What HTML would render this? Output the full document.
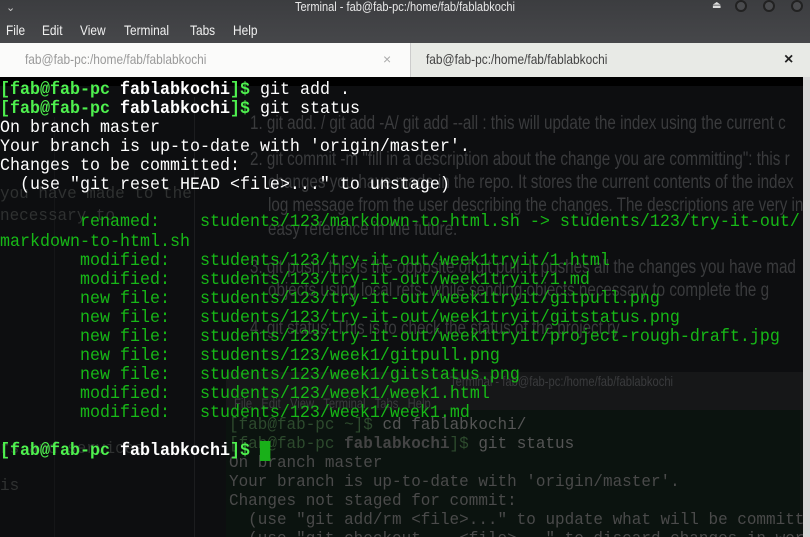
<!DOCTYPE html>
<html><head><meta charset="utf-8"><style>
*{margin:0;padding:0;box-sizing:border-box}
body{width:810px;height:537px;overflow:hidden;background:#0c0d0f;font-family:"Liberation Sans",sans-serif;position:relative}
#top{position:absolute;left:0;top:0;width:810px;height:43px;background:linear-gradient(#3c3d40,#46474a)}
#title{position:absolute;top:0;left:0;width:810px;text-align:center;color:#e8e8e8;font-size:13px;line-height:14px;transform:scaleX(.85)}
.menu{position:absolute;top:22px;color:#f0f0f0;font-size:14px;transform:scaleX(.85);transform-origin:left}
.circ{position:absolute;top:0px;width:12px;height:12px;border-radius:50%;background:#4a4b4e;border:2px solid #222}
#tabs{position:absolute;top:43px;left:0;width:810px;height:34px;background:#f4f5f2}
.tab{position:absolute;top:0;height:34px;font-size:14px;line-height:33px}
#term{position:absolute;left:0;top:77px;width:803px;height:460px;background:#0d0e10;overflow:hidden}
.ghost{position:absolute;color:#3a3b3d;font-size:19px;white-space:nowrap;transform:scaleX(.8);transform-origin:left}
.gm{position:absolute;color:#2f3131;font-family:"Liberation Mono",monospace;font-size:17px;white-space:pre;transform:scaleX(.94);transform-origin:left}
.l{position:absolute;left:0;height:19px;font-family:"Liberation Mono",monospace;font-size:17.5px;line-height:19px;white-space:pre;color:#fff;transform:scaleX(.952);transform-origin:left}
.b{color:#4ef04e;font-weight:bold}.w{color:#fff;font-weight:bold}.g{color:#17b817}
</style></head><body>
<div id="top">
<div style="position:absolute;left:6px;top:1px;color:#ccc;font-size:11px">&#8964;</div>
<div id="title">Terminal - fab@fab-pc:/home/fab/fablabkochi</div>
<div class="menu" style="left:6px">File</div><div class="menu" style="left:42px">Edit</div><div class="menu" style="left:80px">View</div><div class="menu" style="left:124px">Terminal</div><div class="menu" style="left:190px">Tabs</div><div class="menu" style="left:233px">Help</div>
<div style="position:absolute;left:712px;top:0px;color:#ddd;font-size:10px">&#9167;</div>
<div class="circ" style="left:735px"></div><div class="circ" style="left:763px"></div><div class="circ" style="left:791px"></div>
</div>
<div id="tabs">
<div class="tab" style="left:0;width:410px;background:#fbfbfa"><span style="position:absolute;left:25px;color:#9a9a9a;transform:scaleX(.85);transform-origin:left;display:inline-block">fab@fab-pc:/home/fab/fablabkochi</span><span style="position:absolute;left:383px;color:#aaa">×</span></div>
<div class="tab" style="left:410px;width:400px;background:#e8eae6;border-left:1px solid #ccc"><span style="position:absolute;left:15px;color:#444;transform:scaleX(.85);transform-origin:left;display:inline-block">fab@fab-pc:/home/fab/fablabkochi</span><span style="position:absolute;left:373px;color:#222;font-weight:bold;font-size:16px">×</span></div>
</div>
<div style="position:absolute;left:803px;top:77px;width:7px;height:460px;background:#d8d8d8"></div>
<div id="term">
<div style="position:absolute;left:0;top:0;width:803px;height:9px;background:#000"></div>
<div style="position:absolute;left:194px;top:20px;width:1px;height:440px;background:#1c1d1f"></div>
<div style="position:absolute;left:54px;top:40px;width:1px;height:420px;background:#151618"></div>
<div style="position:absolute;left:226px;top:295px;width:580px;height:170px;background:#0b130f"></div>
<div style="position:absolute;left:226px;top:295px;width:580px;height:38px;background:#161718"></div>
<div class="ghost" style="left:250px;top:36px">1. git add. / git add -A/ git add --all : this will update the index using the current c</div>
<div class="ghost" style="left:250px;top:72px">2. git commit -m "fill in a description about the change you are committing": this r</div>
<div class="ghost" style="left:268px;top:95px">changes you have made in the repo. It stores the current contents of the index</div>
<div class="ghost" style="left:268px;top:118px">log message from the user describing the changes. The descriptions are very in</div>
<div class="ghost" style="left:268px;top:142px">easy reference in the future.</div>
<div class="ghost" style="left:250px;top:180px">3. git push: this is the opposite of git pull. It pushes all the changes you have mad</div>
<div class="ghost" style="left:268px;top:203px">objects using local refs, while sending objects necessary to complete the g</div>
<div class="ghost" style="left:250px;top:241px">4. git status: This is to check the status of the project ry</div>
<div class="ghost" style="left:450px;top:296px;font-size:14px">Terminal - fab@fab-pc:/home/fab/fablabkochi</div>
<div class="ghost" style="left:234px;top:318px;font-size:14px">File &nbsp; Edit &nbsp; View &nbsp; Terminal &nbsp; Tabs &nbsp; Help</div>
<div class="gm" style="left:0;top:108px">you have made to the</div>
<div class="gm" style="left:0;top:130px">necessary to</div>
<div class="gm" style="left:0;top:363px">rs and services.</div>
<div class="gm" style="left:0;top:400px">is</div>
<div class="gm" style="left:229px;top:339px;color:#2d4a2d">[fab@fab-pc ~]$ <span style="color:#555">cd fablabkochi/</span></div>
<div class="gm" style="left:229px;top:358px;color:#2d4a2d">[fab@fab-pc <b style="color:#444">fablabkochi</b>]$ <span style="color:#555">git status</span></div>
<div class="gm" style="left:229px;top:377px;color:#4a4a4a">On branch master</div>
<div class="gm" style="left:229px;top:396px;color:#4a4a4a">Your branch is up-to-date with 'origin/master'.</div>
<div class="gm" style="left:229px;top:415px;color:#4a4a4a">Changes not staged for commit:</div>
<div class="gm" style="left:229px;top:434px;color:#4a4a4a">  (use "git add/rm &lt;file&gt;..." to update what will be committe</div>
<div class="gm" style="left:229px;top:453px;color:#4a4a4a">  (use "git checkout -- &lt;file&gt;..." to discard changes in wor</div>
</div>
<div style="position:absolute;left:0;top:2px">
<div class="l" style="top:79px"><span class="b">[fab@fab-pc </span><span class="w">fablabkochi</span><span class="b">]$</span> git add .</div>
<div class="l" style="top:98px"><span class="b">[fab@fab-pc </span><span class="w">fablabkochi</span><span class="b">]$</span> git status</div>
<div class="l" style="top:117px">On branch master</div>
<div class="l" style="top:136px">Your branch is up-to-date with 'origin/master'.</div>
<div class="l" style="top:155px">Changes to be committed:</div>
<div class="l" style="top:174px">  (use "git reset HEAD &lt;file&gt;..." to unstage)</div>
<div class="l g" style="top:211px">        renamed:    students/123/markdown-to-html.sh -&gt; students/123/try-it-out/</div>
<div class="l g" style="top:231px">markdown-to-html.sh</div>
<div class="l g" style="top:250px">        modified:   students/123/try-it-out/week1tryit/1.html</div>
<div class="l g" style="top:269px">        modified:   students/123/try-it-out/week1tryit/1.md</div>
<div class="l g" style="top:288px">        new file:   students/123/try-it-out/week1tryit/gitpull.png</div>
<div class="l g" style="top:307px">        new file:   students/123/try-it-out/week1tryit/gitstatus.png</div>
<div class="l g" style="top:326px">        new file:   students/123/try-it-out/week1tryit/project-rough-draft.jpg</div>
<div class="l g" style="top:345px">        new file:   students/123/week1/gitpull.png</div>
<div class="l g" style="top:364px">        new file:   students/123/week1/gitstatus.png</div>
<div class="l g" style="top:383px">        modified:   students/123/week1/week1.html</div>
<div class="l g" style="top:402px">        modified:   students/123/week1/week1.md</div>
<div class="l" style="top:440px"><span class="b">[fab@fab-pc </span><span class="w">fablabkochi</span><span class="b">]$</span> <span style="background:#19b019"> </span></div>
</div>
</body></html>
